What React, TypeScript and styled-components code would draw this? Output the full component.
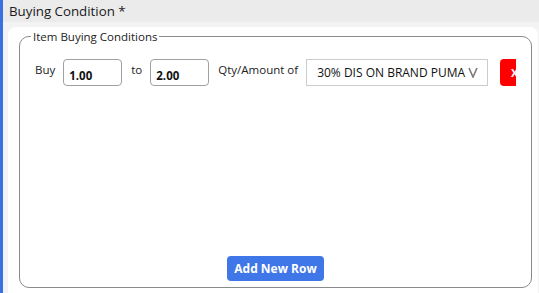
import styled, { createGlobalStyle } from 'styled-components';

const GlobalStyle = createGlobalStyle`
  html, body {
    margin: 0;
    padding: 0;
    background: #ffffff;
  }
  body {
    font-family: 'Open Sans', 'Noto Sans', Arial, sans-serif;
    color: #1f1f1f;
  }
`;

const Page = styled.div`
  display: flex;
  width: 539px;
  height: 293px;
  overflow: hidden;
`;

const SideBar = styled.div`
  width: 3px;
  background-color: #3b70e3;
  flex-shrink: 0;
`;

const Main = styled.div`
  flex: 1;
  display: flex;
  flex-direction: column;
  background-color: #f3f3f3;
`;

const Header = styled.div`
  height: 22px;
  line-height: 22px;
  background-color: #ebebeb;
  padding-left: 6px;
  font-size: 13.3px;
  color: #1a1a1a;
`;

const Panel = styled.div`
  flex: 1;
  margin: 5px 2px 0 5px;
  padding: 2px 6px 5px 11px;
  background-color: #ffffff;
  border-radius: 8px 8px 0 0;
  display: flex;
`;

const FieldSet = styled.fieldset`
  flex: 1;
  margin: 0;
  padding: 0;
  border: 1px solid #8a8a8a;
  border-radius: 10px;
  min-width: 0;
`;

const Legend = styled.legend`
  padding: 0 2px;
  margin-left: 11px;
  font-size: 11.5px;
  color: #222;
`;

const Content = styled.div`
  box-sizing: border-box;
  height: 100%;
  padding: 15px 15px 6px 15px;
  display: flex;
  flex-direction: column;
`;

const Row = styled.div`
  width: 481px;
  display: flex;
  align-items: flex-start;
  gap: 8px;
  overflow: hidden;
`;

const Label = styled.span<{ $first?: boolean }>`
  font-size: 11.5px;
  padding: 3px 0 0 ${(p) => (p.$first ? 0 : 1)}px;
  white-space: nowrap;
  color: #222;
  flex-shrink: 0;
`;

const NumberInput = styled.input`
  box-sizing: border-box;
  width: 59px;
  height: 27px;
  padding: 6px 5px 0;
  border: 1px solid #a0a0a0;
  border-radius: 4px;
  font-family: inherit;
  font-size: 11.5px;
  font-weight: 700;
  color: #111;
  outline: none;
  flex-shrink: 0;
`;

const Select = styled.div`
  box-sizing: border-box;
  width: 182px;
  height: 27px;
  padding: 0 9px 0 10px;
  border: 1px solid #cccccc;
  display: flex;
  align-items: center;
  justify-content: space-between;
  font-size: 12px;
  color: #111;
  white-space: nowrap;
  flex-shrink: 0;
`;

const RemoveButton = styled.button`
  flex-shrink: 0;
  width: 29px;
  height: 27px;
  margin-left: 4px;
  border: none;
  border-radius: 4px;
  background-color: #ff0000;
  color: #ffffff;
  font-family: inherit;
  font-size: 11px;
  font-weight: 700;
  padding: 0;
  cursor: pointer;
`;

const AddButton = styled.button`
  align-self: center;
  margin-top: auto;
  width: 97px;
  height: 25px;
  border: none;
  border-radius: 4px;
  background-color: #3f76e8;
  color: #ffffff;
  font-family: inherit;
  font-size: 12px;
  font-weight: 700;
  padding: 0;
  cursor: pointer;
`;

const Chevron = () => (
  <svg width="10" height="11" viewBox="0 0 10 11">
    <polyline points="1,1 5,10 9,1" fill="none" stroke="#7a7a7a" strokeWidth="1.6" />
  </svg>
);

const App = () => {
  return (
    <>
      <GlobalStyle />
      <Page>
        <SideBar />
        <Main>
          <Header>Buying Condition *</Header>
          <Panel>
            <FieldSet>
              <Legend>Item Buying Conditions</Legend>
              <Content>
                <Row>
                  <Label $first>Buy</Label>
                  <NumberInput defaultValue="1.00" />
                  <Label>to</Label>
                  <NumberInput defaultValue="2.00" />
                  <Label>Qty/Amount of</Label>
                  <Select>
                    <span>30% DIS ON BRAND PUMA</span>
                    <Chevron />
                  </Select>
                  <RemoveButton>X</RemoveButton>
                </Row>
                <AddButton>Add New Row</AddButton>
              </Content>
            </FieldSet>
          </Panel>
        </Main>
      </Page>
    </>
  );
};

export default App;
